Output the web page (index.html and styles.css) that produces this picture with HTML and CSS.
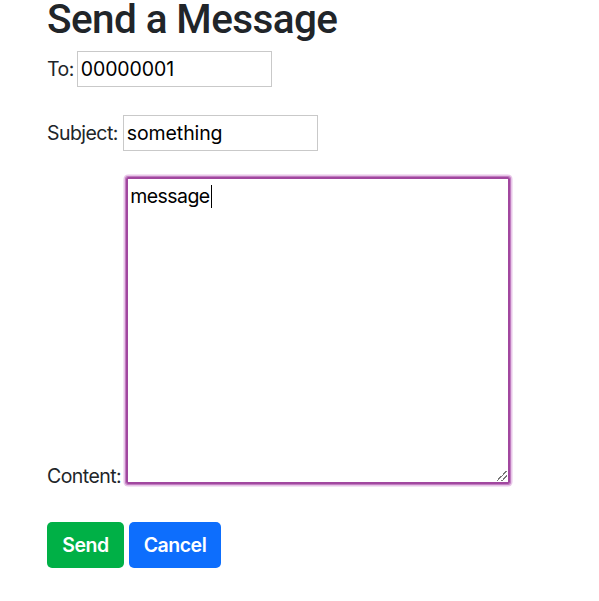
FILE: index.html
```html
<!DOCTYPE html>
<html lang="en">
<head>
<meta charset="utf-8">
<title>Send a Message</title>
<link rel="stylesheet" href="styles.css">
</head>
<body>
<div class="page">
  <h1 class="title">Send a Message</h1>
  <form class="msg-form">
    <div class="row row-to">
      <label class="lbl" for="to">To:</label>
      <input class="field" id="to" type="text" value="00000001">
    </div>
    <div class="row row-subject">
      <label class="lbl" for="subject">Subject:</label>
      <input class="field" id="subject" type="text" value="something">
    </div>
    <div class="row row-content">
      <label class="lbl lbl-bottom" for="content">Content:</label>
      <div class="area" id="content"><span class="area-text">message</span><span class="caret"></span><span class="grip"></span></div>
    </div>
    <div class="actions">
      <button type="button" class="btn btn-send">Send</button>
      <button type="button" class="btn btn-cancel">Cancel</button>
    </div>
  </form>
</div>
</body>
</html>
```
FILE: styles.css
```css
html, body {
  margin: 0;
  padding: 0;
  background: #ffffff;
}
body {
  font-family: Inter, "Liberation Sans", sans-serif;
  font-size: 19.5px;
  letter-spacing: -0.55px;
  color: #212529;
}
.page {
  padding-left: 47px;
}
.title {
  margin: 0;
  font-family: Roboto, Inter, "Liberation Sans", sans-serif;
  font-size: 40.5px;
  font-weight: 500;
  line-height: 38px;
  letter-spacing: -0.6px;
}
.msg-form {
  margin: 0;
}
.row {
  display: flex;
  align-items: baseline;
  gap: 5px;
}
.row-to {
  margin-top: 13px;
  gap: 3px;
}
.row-subject {
  margin-top: 28px;
}
.row-content {
  margin-top: 26px;
  align-items: flex-end;
}
.lbl {
  line-height: 1.2;
}
.lbl-bottom {
  margin-bottom: -4px;
}
.field {
  box-sizing: border-box;
  width: 195px;
  height: 36px;
  margin: 0;
  padding: 0 3px;
  border: 1px solid #c9c9c9;
  border-radius: 0;
  font-family: Inter, "Liberation Sans", sans-serif;
  font-size: 19.5px;
  letter-spacing: -0.1px;
  color: #000;
  background: #fff;
  outline: none;
}
.area {
  position: relative;
  box-sizing: border-box;
  width: 384px;
  height: 307px;
  padding: 6px 2px 3px;
  border: 2px solid #a1479f;
  border-radius: 2px;
  box-shadow: 0 0 0 1px #c07dc0, 0 0 0 2.5px rgba(214, 150, 214, 0.55);
  font-size: 19.5px;
  line-height: 23px;
  color: #000;
}
.caret {
  display: inline-block;
  width: 1px;
  height: 23px;
  margin-left: 1px;
  background: #000;
  vertical-align: top;
}
.grip {
  position: absolute;
  right: 1px;
  bottom: 1px;
  width: 10px;
  height: 10px;
  background: linear-gradient(135deg, transparent 45%, #777 45%, #777 52%, transparent 52%, transparent 70%, #777 70%, #777 77%, transparent 77%);
}
.actions {
  display: flex;
  gap: 5px;
  margin-top: 38px;
}
.btn {
  box-sizing: border-box;
  height: 46px;
  padding: 0;
  border: none;
  border-radius: 5px;
  font-family: Inter, "Liberation Sans", sans-serif;
  font-size: 19.5px;
  font-weight: 600;
  letter-spacing: -0.5px;
  color: #fff;
  cursor: pointer;
}
.btn-send {
  background: #00b046;
  width: 77px;
}
.btn-cancel {
  background: #0d6efd;
  width: 92px;
}
```
